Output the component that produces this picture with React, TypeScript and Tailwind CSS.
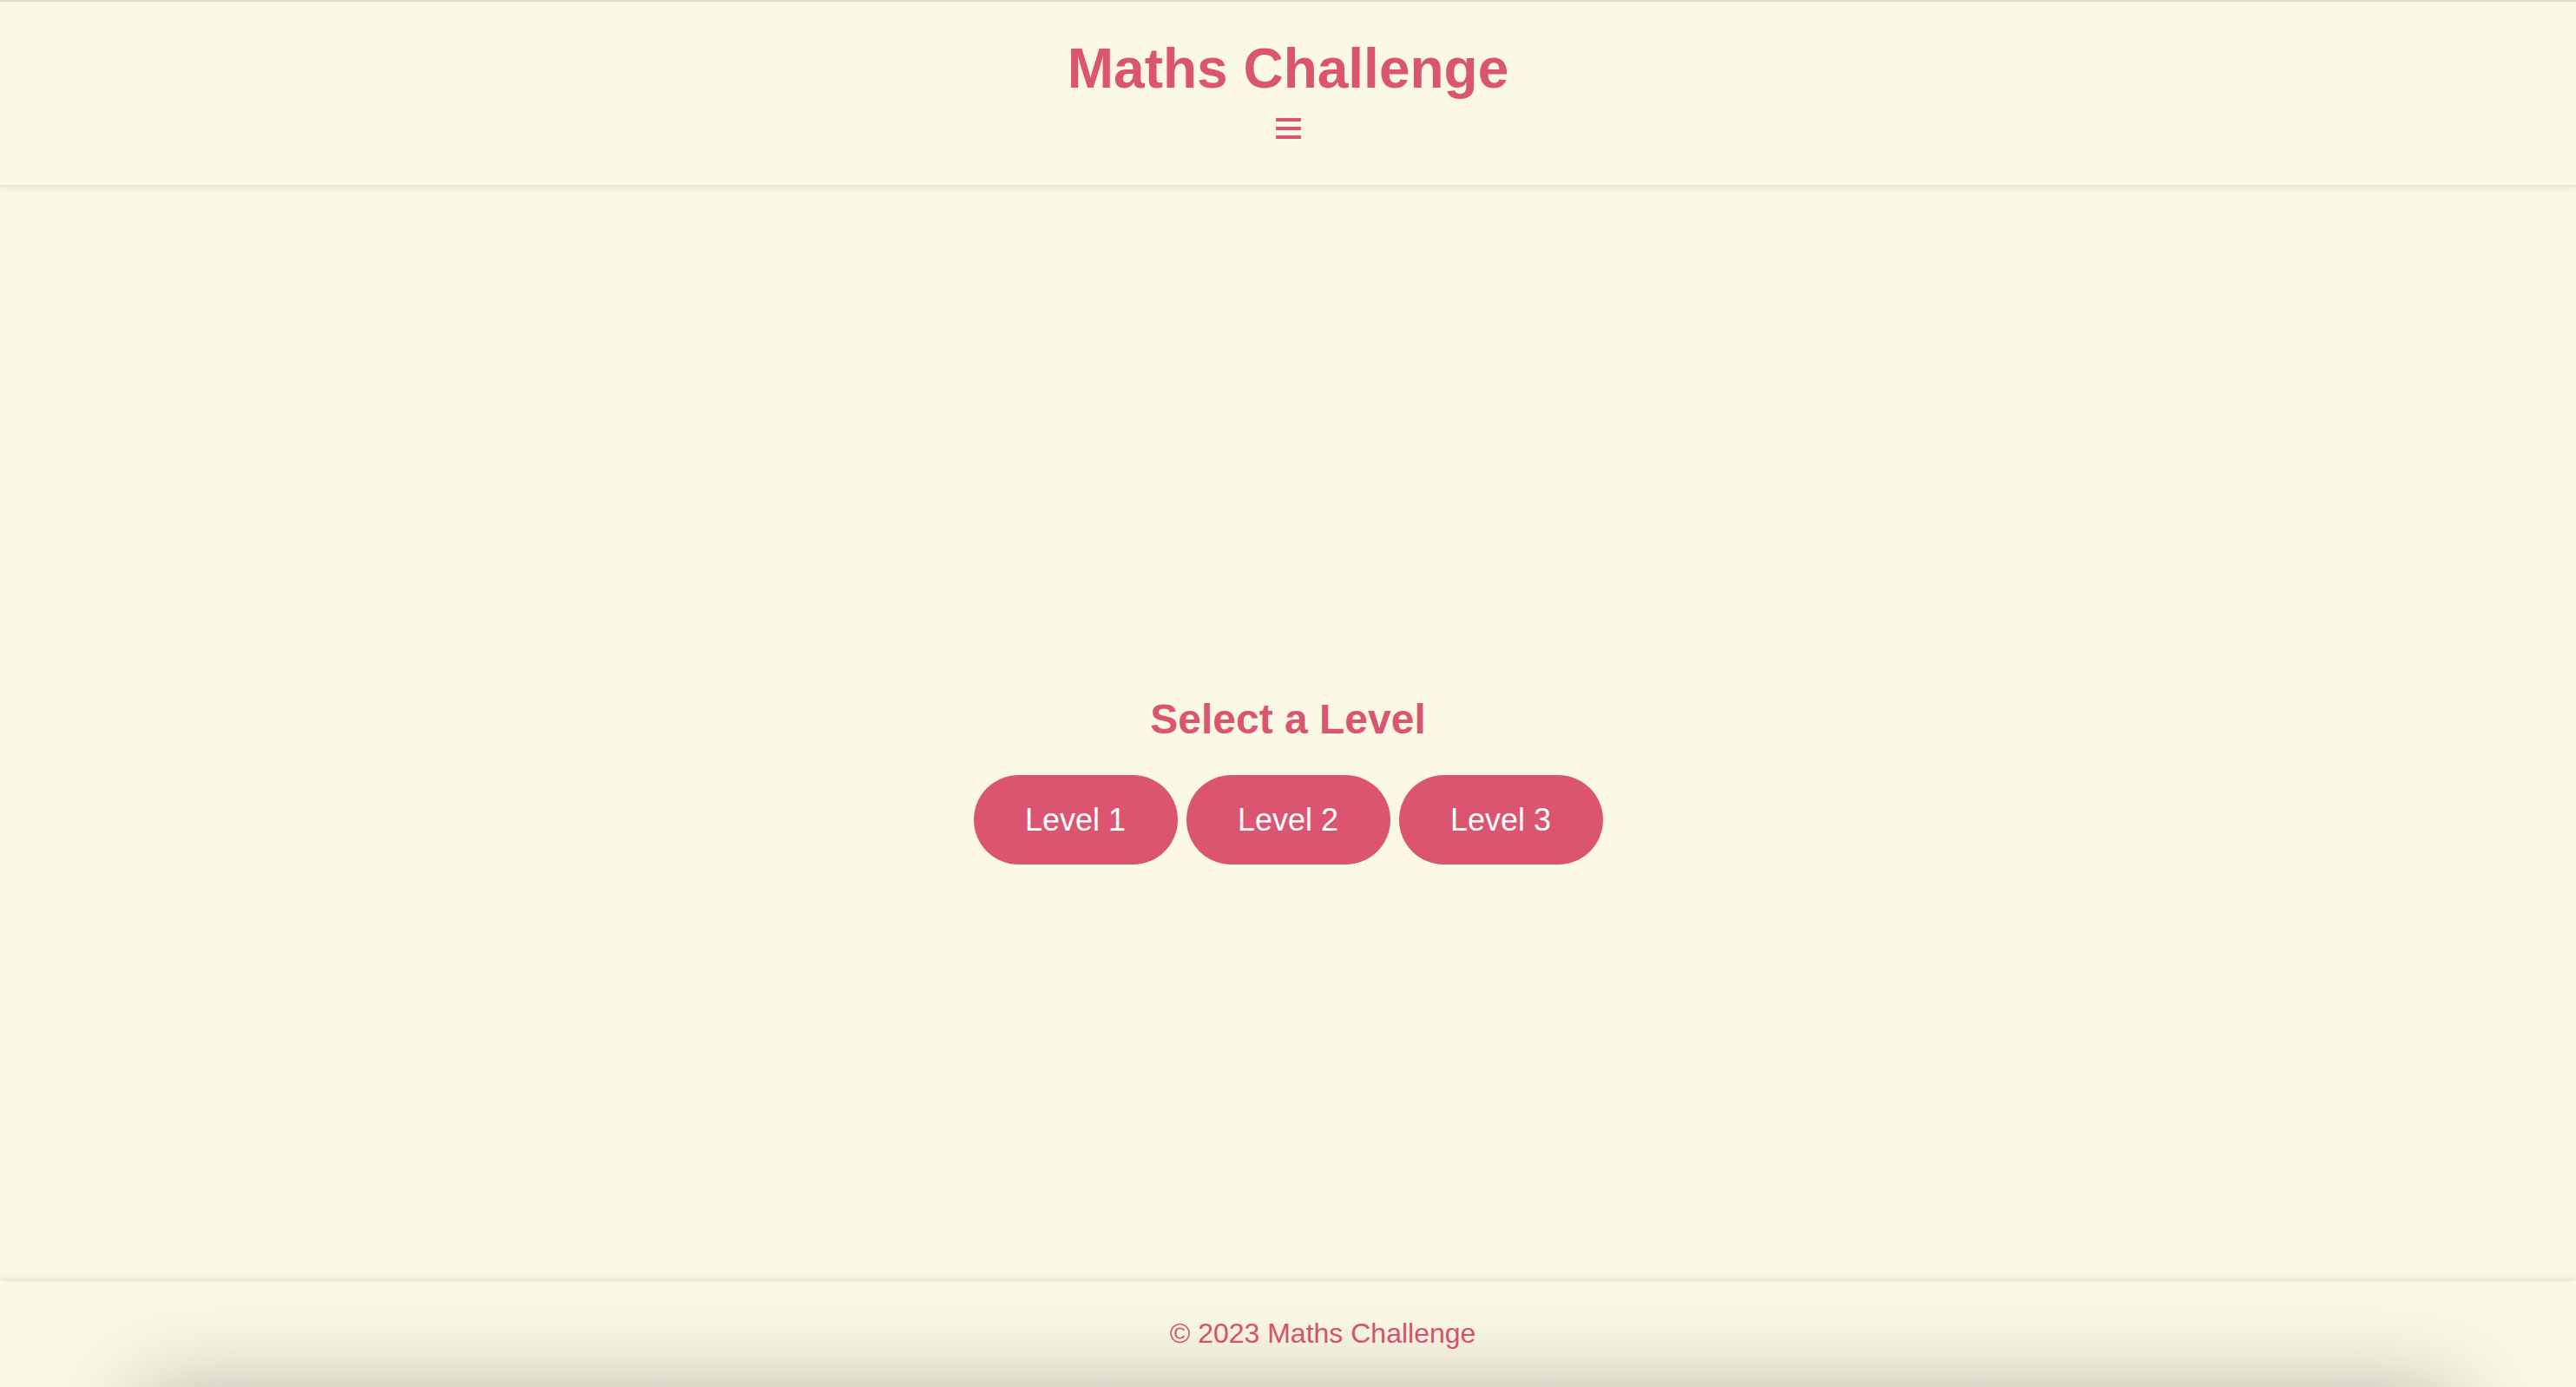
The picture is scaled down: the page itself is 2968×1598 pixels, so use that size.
import React from "react";

const font = { fontFamily: '"Liberation Sans", Arial, Helvetica, sans-serif' };

export default function App() {
  return (
    <div
      className="relative flex h-[1598px] w-full flex-col overflow-hidden bg-[#fcf8e6] font-['Liberation_Sans',Arial,sans-serif]"
      style={font}
    >
      <div className="h-[2px] w-full shrink-0 bg-[#e2dfd6]" />
      <header className="relative z-10 flex h-[211px] shrink-0 flex-col items-center bg-[#fcf8e6] pt-[40px] shadow-[0_3px_8px_rgba(0,0,0,0.09)]">
        <h1 className="m-0 text-[64px] font-bold leading-[74px] text-[#db5470]">
          Maths Challenge
        </h1>
        <button
          aria-label="Menu"
          className="mt-[20px] flex flex-col gap-[6px] bg-transparent p-0"
        >
          <span className="block h-[4px] w-[29px] rounded-[1px] bg-[#db5470]" />
          <span className="block h-[4px] w-[29px] rounded-[1px] bg-[#db5470]" />
          <span className="block h-[4px] w-[29px] rounded-[1px] bg-[#db5470]" />
        </button>
      </header>

      <main className="flex flex-1 flex-col items-center justify-center pt-[108px]">
        <h2 className="m-0 text-[48px] font-bold leading-[55px] text-[#db5470]">
          Select a Level
        </h2>
        <div className="mt-[37px] flex gap-[10px]">
          {["Level 1", "Level 2", "Level 3"].map((l) => (
            <button
              key={l}
              className="flex h-[103px] w-[235px] items-center justify-center rounded-full bg-[#db5470] text-[36px] leading-[41px] text-white"
            >
              {l}
            </button>
          ))}
        </div>
      </main>

      <footer className="relative z-10 h-[122px] shrink-0 bg-[#fcf8e6] pl-[80px] pt-[42px] text-center shadow-[0_-3px_8px_rgba(0,0,0,0.09)]">
        <p className="m-0 text-[32px] leading-[37px] text-[#db5470]">
          © 2023 Maths Challenge
        </p>
        <div className="absolute left-[170px] right-[150px] top-[calc(100%+20px)] h-[200px] shadow-[0_0_110px_10px_rgba(0,0,0,0.3)]" />
      </footer>
    </div>
  );
}
